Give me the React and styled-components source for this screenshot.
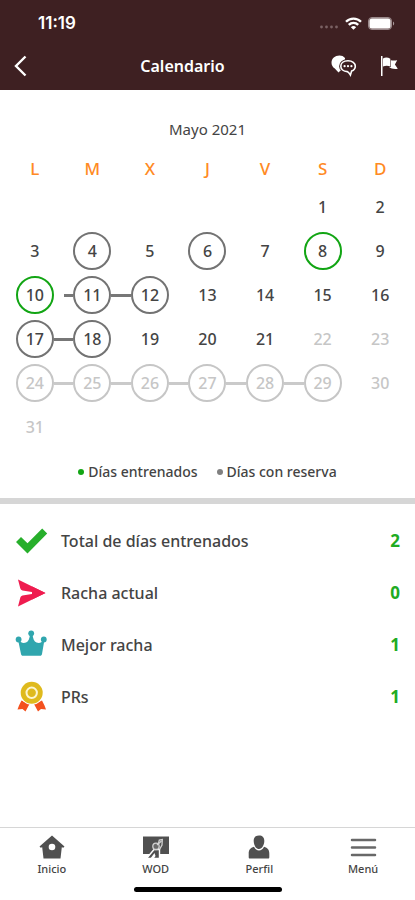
import React from "react";
import styled, { createGlobalStyle } from "styled-components";

const GlobalStyle = createGlobalStyle`
  *, *::before, *::after { box-sizing: border-box; }
  body {
    margin: 0;
    background: #ffffff;
    color: #444444;
    font-family: "Noto Sans", "Open Sans", sans-serif;
  }
  button { font: inherit; color: inherit; background: none; border: 0; padding: 0; cursor: pointer; }
  svg { display: block; }
`;

const Screen = styled.div`
  display: flex;
  flex-direction: column;
  min-height: 100vh;
`;

const Header = styled.header`
  background: #3e2022;
  color: #ffffff;
  height: 90px;
`;

const StatusBar = styled.div`
  display: flex;
  align-items: center;
  justify-content: space-between;
  height: 46px;
  padding: 0 20px 0 38px;
`;

const Clock = styled.span`
  font-family: Inter, sans-serif;
  font-size: 17px;
  font-weight: 600;
`;

const StatusIcons = styled.div`
  display: flex;
  align-items: center;
  gap: 6px;
`;

const TitleBar = styled.div`
  display: flex;
  align-items: center;
  height: 40px;
  padding: 0 16px 0 14px;
`;

const Title = styled.h1`
  flex: 1;
  margin: 0;
  font-size: 16px;
  font-weight: 600;
  line-height: 24px;
  text-align: center;
`;

const IconButton = styled.button`
  display: grid;
  place-items: center;
`;

const BackButton = styled(IconButton)`
  justify-items: start;
  width: 20px;
`;

const Actions = styled.div`
  display: flex;
  align-items: center;
  gap: 22px;
`;

const Calendar = styled.section`
  padding: 27px 6px 14px;
`;

const Month = styled.h2`
  margin: 0;
  font-size: 15px;
  font-weight: 400;
  line-height: 24px;
  text-align: center;
`;

const Days = styled.table`
  width: 100%;
  table-layout: fixed;
  border-collapse: collapse;
  margin-top: 11px;
`;

const Weekday = styled.th`
  height: 33px;
  padding: 0;
  color: #ff8a24;
  font-size: 17px;
  font-weight: 500;
`;

const Cell = styled.td`
  height: 44px;
  padding: 0;
`;

const CellRow = styled.div`
  display: flex;
  align-items: center;
`;

const Link = styled.span`
  flex: 1;
  height: 3px;
  background: ${(p) => (p.$on ? (p.$muted ? "#cacaca" : "#777777") : "transparent")};
`;

const ringColor = { done: "#12a514", booked: "#737373", muted: "#c6c6c6" };

const Day = styled.button`
  width: 38px;
  height: 38px;
  border: 2px solid ${(p) => ringColor[p.$ring] || "transparent"};
  border-radius: 50%;
  color: ${(p) => (p.$muted ? "#c6c6c6" : "#444444")};
  font-size: 16px;
  font-weight: 500;
  line-height: 24px;
`;

const Legend = styled.div`
  display: flex;
  justify-content: center;
  gap: 19px;
  margin-top: 11px;
  font-size: 14px;
  font-weight: 500;
  line-height: 24px;
`;

const LegendItem = styled.span`
  display: flex;
  align-items: center;
  gap: 4px;
`;

const Dot = styled.i`
  width: 6px;
  height: 6px;
  border-radius: 50%;
  background: ${(p) => p.$color};
`;

const Divider = styled.hr`
  width: 100%;
  height: 6px;
  margin: 0;
  border: 0;
  background: #d6d6d6;
`;

const Stats = styled.ul`
  margin: 0;
  padding: 11px 15px;
  list-style: none;
`;

const Stat = styled.li`
  display: flex;
  align-items: center;
  gap: 13px;
  height: 52px;
  font-size: 16px;
  font-weight: 500;
  line-height: 24px;
`;

const StatValue = styled.strong`
  margin-left: auto;
  color: #20ab22;
  font-size: 17px;
  font-weight: 700;
`;

const TabBar = styled.nav`
  display: grid;
  grid-template-columns: repeat(4, 1fr);
  margin-top: auto;
  padding-top: 7px;
  border-top: 1px solid #d6d6d6;
`;

const Tab = styled.button`
  display: flex;
  flex-direction: column;
  align-items: center;
  gap: 2px;
  height: 46px;
  font-size: 11px;
  font-weight: 500;
  line-height: 16px;
`;

const HomeIndicator = styled.div`
  width: 148px;
  height: 5px;
  margin: 6px auto 8px;
  border-radius: 3px;
  background: #000000;
`;

const SignalIcon = () => (
  <svg width="20" height="14" viewBox="0 0 20 14" fill="#7b6264" aria-hidden="true">
    <circle cx="2.500" cy="11" r="1.400" />
    <circle cx="7.500" cy="11" r="1.400" />
    <circle cx="12.500" cy="11" r="1.400" />
    <circle cx="17.500" cy="11" r="1.400" />
  </svg>
);

const WifiIcon = () => (
  <svg width="17" height="13" viewBox="0 0 17 13" fill="none" stroke="#fff" strokeWidth="2.3" aria-hidden="true">
    <path d="M1 4.8C5 .6 12 .6 16 4.8" />
    <path d="M3.8 7.9c2.6-2.8 6.8-2.8 9.4 0" />
    <path d="M8.5 12.8 5.9 10.2c1.5-1.5 3.7-1.5 5.2 0z" fill="#fff" stroke="none" />
  </svg>
);

const BatteryIcon = () => (
  <svg width="27" height="13" viewBox="0 0 27 13" aria-hidden="true">
    <rect x=".5" y=".5" width="23" height="12" rx="3.5" fill="#6f5557" stroke="#9a898b" />
    <rect x="1.500" y="1.500" width="21" height="10" rx="2.500" fill="#fff" />
    <path d="M25 4.5c1.6.6 1.6 3.4 0 4z" fill="#a79799" />
  </svg>
);

const BackIcon = () => (
  <svg width="14" height="22" viewBox="0 0 14 22" fill="none" stroke="#fff" strokeWidth="2.4" aria-hidden="true">
    <path d="M11.5 1.5 2 11l9.500 9.500" />
  </svg>
);

const ChatIcon = () => (
  <svg width="26" height="22" viewBox="0 0 26 22" aria-hidden="true">
    <path d="M8.500.500C4 .500.500 3.600.500 7.700c0 2.300 1.300 4.500 3.300 5.800L7.500 17.500l2-2H14V3C12.600 1.300 10.700.500 8.500.500z" fill="#fff" />
    <path
      d="M17 5.800c-4.400 0-7.200 2.400-7.200 5.400 0 2.900 2.700 5.100 6.400 5.400 1.400.5 2.200 1.800 3.200 3.400l1.200-3.900c2.200-.9 3.700-2.700 3.700-4.900 0-3-3-5.400-7.300-5.400z"
      fill="#3e2022"
      stroke="#3e2022"
      strokeWidth="3.400"
    />
    <path
      d="M17 5.800c-4.400 0-7.200 2.400-7.200 5.400 0 2.900 2.700 5.100 6.400 5.400 1.400.5 2.200 1.800 3.200 3.400l1.200-3.900c2.200-.9 3.700-2.700 3.700-4.900 0-3-3-5.400-7.300-5.400z"
      fill="none"
      stroke="#fff"
      strokeWidth="1.600"
    />
    <g fill="#fff">
      <circle cx="13.600" cy="11.200" r="1.100" />
      <circle cx="17" cy="11.200" r="1.100" />
      <circle cx="20.400" cy="11.200" r="1.100" />
    </g>
  </svg>
);

const FlagIcon = () => (
  <svg width="20" height="22" viewBox="0 0 20 22" fill="#fff" aria-hidden="true">
    <rect x="2" y="1" width="1.500" height="20" />
    <path d="M4 3.500c2.400-1.400 5-1 7.300.2v7.800c-2.300-1.100-4.900-1-7.300 0z" />
    <path d="M11.800 5.200c2 .5 4 .6 6.400 0l-2.300 4.300 2.900 4.200c-3.700.5-6.700 0-8.800-1.700l1.800-.1z" />
  </svg>
);

const CheckIcon = () => (
  <svg width="33" height="33" viewBox="0 0 33 33" aria-hidden="true">
    <path d="M1 17 6 12l6.500 6.200L27.200 3.500l5 5L12.500 28.500z" fill="#27af2b" />
  </svg>
);

const SendIcon = () => (
  <svg width="33" height="33" viewBox="0 0 33 33" fill="#ef1c4f" aria-hidden="true">
    <path d="M3 2.500 30.500 16 20 15.400 7.500 13.500C6 13 5.500 12.300 5.200 11z" />
    <path d="M3 29.500 30.500 16 20 16.600 7.500 18.500C6 19 5.500 19.700 5.200 21z" />
    <path d="M17 9.500 30.500 16 17 22.500z" />
  </svg>
);

const CrownIcon = () => (
  <svg width="33" height="33" viewBox="0 0 33 33" fill="#30a6ae" aria-hidden="true">
    <path d="M3 10.500c2.500 3 5 4 8 3 2.500-1 3.500-4 4-8h2.500c.5 4 1.500 7 4 8 3 1 5.500 0 8-3l-2.500 14.500c-.2 1.200-.8 1.800-2 1.800H8c-1.200 0-1.800-.6-2-1.800z" />
    <circle cx="3.600" cy="10.500" r="2.900" />
    <circle cx="16.200" cy="4.300" r="2.900" />
    <circle cx="28.800" cy="10.500" r="2.900" />
  </svg>
);

const MedalIcon = () => (
  <svg width="33" height="33" viewBox="0 0 33 33" aria-hidden="true">
    <g fill="#f4511e">
      <path d="m6.500 19.500 8 3.500-4 7.500-3-2.500-5 .5 1.500-4z" />
      <path d="m27 19.500-8 3.500 4 7.500 3-2.500 5 .5-1.500-4z" />
    </g>
    <circle cx="16.700" cy="11.800" r="12" fill="#fff" />
    <circle cx="16.700" cy="11.800" r="11" fill="#dfba1d" />
    <circle cx="16.700" cy="11.800" r="5.200" fill="#dfba1d" stroke="#fdf6d0" strokeWidth="2" />
  </svg>
);

const HomeIcon = () => (
  <svg width="28" height="24" viewBox="0 0 28 24" aria-hidden="true">
    <path d="M14 .5 26.500 11.500l-1.200 1.300-1.500-.6L22.500 23.500h-17L4.200 12.200l-1.500.6L1.500 11.500z" fill="#505050" />
    <circle cx="14" cy="12" r="3.300" fill="#fff" />
  </svg>
);

const BoardIcon = () => (
  <svg width="28" height="24" viewBox="0 0 28 24" aria-hidden="true">
    <path d="M1 1.500h26V19H1z" fill="#505050" />
    <path d="M4.500 23.500 12 14.500h5.500v9z" fill="#505050" stroke="#fff" strokeWidth="1.400" />
    <path d="m8 24 4.500-6 1 3-2 3z" fill="#fff" />
    <circle cx="14" cy="11.300" r="3.200" fill="#6a6a6a" stroke="#d2d2d2" strokeWidth="1.300" />
    <path d="m16.500 8.500.8-3.500 3-.5-.3 5.500-2.500 4.500" fill="none" stroke="#d2d2d2" strokeWidth="1.300" />
    <path d="m15 10 4.500-4" stroke="#d2d2d2" strokeWidth="1.300" />
  </svg>
);

const PersonIcon = () => (
  <svg width="28" height="24" viewBox="0 0 28 24" aria-hidden="true">
    <path d="M9 11.800c1.200 2.500 2.900 3.700 5 3.700s3.800-1.200 5-3.700c3.800 1.200 5.300 3 5.300 7v3.200c0 1-.3 1.500-1.300 1.500H5c-1 0-1.300-.5-1.300-1.500v-3.200c0-4 1.500-5.800 5.300-7z" fill="#505050" />
    <path
      d="M14 .5c3.700 0 5.500 2.300 5.300 5.800-.2 3.700-2.100 7.700-5.300 7.700S8.900 10 8.700 6.300C8.500 2.800 10.300.5 14 .5z"
      fill="#505050"
    />
  </svg>
);

const MenuIcon = () => (
  <svg width="28" height="24" viewBox="0 0 28 24" stroke="#686868" strokeWidth="2.500" strokeLinecap="round" aria-hidden="true">
    <path d="M3 5h23M3 12.500h23M3 20h23" />
  </svg>
);

const weekdays = ["L", "M", "X", "J", "V", "S", "D"];
const weeks = [
  [null, null, null, null, null, 1, 2],
  [3, 4, 5, 6, 7, 8, 9],
  [10, 11, 12, 13, 14, 15, 16],
  [17, 18, 19, 20, 21, 22, 23],
  [24, 25, 26, 27, 28, 29, 30],
  [31, null, null, null, null, null, null],
];
const trained = [8, 10];
const booked = [4, 6, 11, 12, 17, 18, 24, 25, 26, 27, 28, 29];
const linkedLeft = [11, 12, 18, 25, 26, 27, 28, 29];
const linkedRight = [11, 17, 24, 25, 26, 27, 28];

const stats = [
  { label: "Total de días entrenados", value: 2, Icon: CheckIcon },
  { label: "Racha actual", value: 0, Icon: SendIcon },
  { label: "Mejor racha", value: 1, Icon: CrownIcon },
  { label: "PRs", value: 1, Icon: MedalIcon },
];

const tabs = [
  { label: "Inicio", Icon: HomeIcon },
  { label: "WOD", Icon: BoardIcon },
  { label: "Perfil", Icon: PersonIcon },
  { label: "Menú", Icon: MenuIcon },
];

function CalendarDay({ day }) {
  if (!day) return null;
  const muted = day > 21;
  let ring;
  if (trained.includes(day)) ring = "done";
  else if (booked.includes(day)) ring = muted ? "muted" : "booked";
  return (
    <CellRow>
      <Link $on={linkedLeft.includes(day)} $muted={muted} />
      <Day type="button" $ring={ring} $muted={muted}>{day}</Day>
      <Link $on={linkedRight.includes(day)} $muted={muted} />
    </CellRow>
  );
}

export default function App() {
  return (
    <Screen>
      <GlobalStyle />
      <Header>
        <StatusBar>
          <Clock>11:19</Clock>
          <StatusIcons>
            <SignalIcon />
            <WifiIcon />
            <BatteryIcon />
          </StatusIcons>
        </StatusBar>
        <TitleBar>
          <BackButton type="button" aria-label="Atrás"><BackIcon /></BackButton>
          <Title>Calendario</Title>
          <Actions>
            <IconButton type="button" aria-label="Mensajes"><ChatIcon /></IconButton>
            <IconButton type="button" aria-label="Marcar"><FlagIcon /></IconButton>
          </Actions>
        </TitleBar>
      </Header>
      <main>
        <Calendar>
          <Month>Mayo 2021</Month>
          <Days>
            <thead>
              <tr>{weekdays.map((d) => <Weekday key={d} scope="col">{d}</Weekday>)}</tr>
            </thead>
            <tbody>
              {weeks.map((week, w) => (
                <tr key={w}>
                  {week.map((day, i) => <Cell key={i}><CalendarDay day={day} /></Cell>)}
                </tr>
              ))}
            </tbody>
          </Days>
          <Legend>
            <LegendItem><Dot $color="#12a514" />Días entrenados</LegendItem>
            <LegendItem><Dot $color="#808080" />Días con reserva</LegendItem>
          </Legend>
        </Calendar>
        <Divider />
        <Stats>
          {stats.map(({ label, value, Icon }) => (
            <Stat key={label}>
              <Icon />
              <span>{label}</span>
              <StatValue>{value}</StatValue>
            </Stat>
          ))}
        </Stats>
      </main>
      <TabBar>
        {tabs.map(({ label, Icon }) => (
          <Tab key={label} type="button"><Icon />{label}</Tab>
        ))}
      </TabBar>
      <HomeIndicator />
    </Screen>
  );
}
